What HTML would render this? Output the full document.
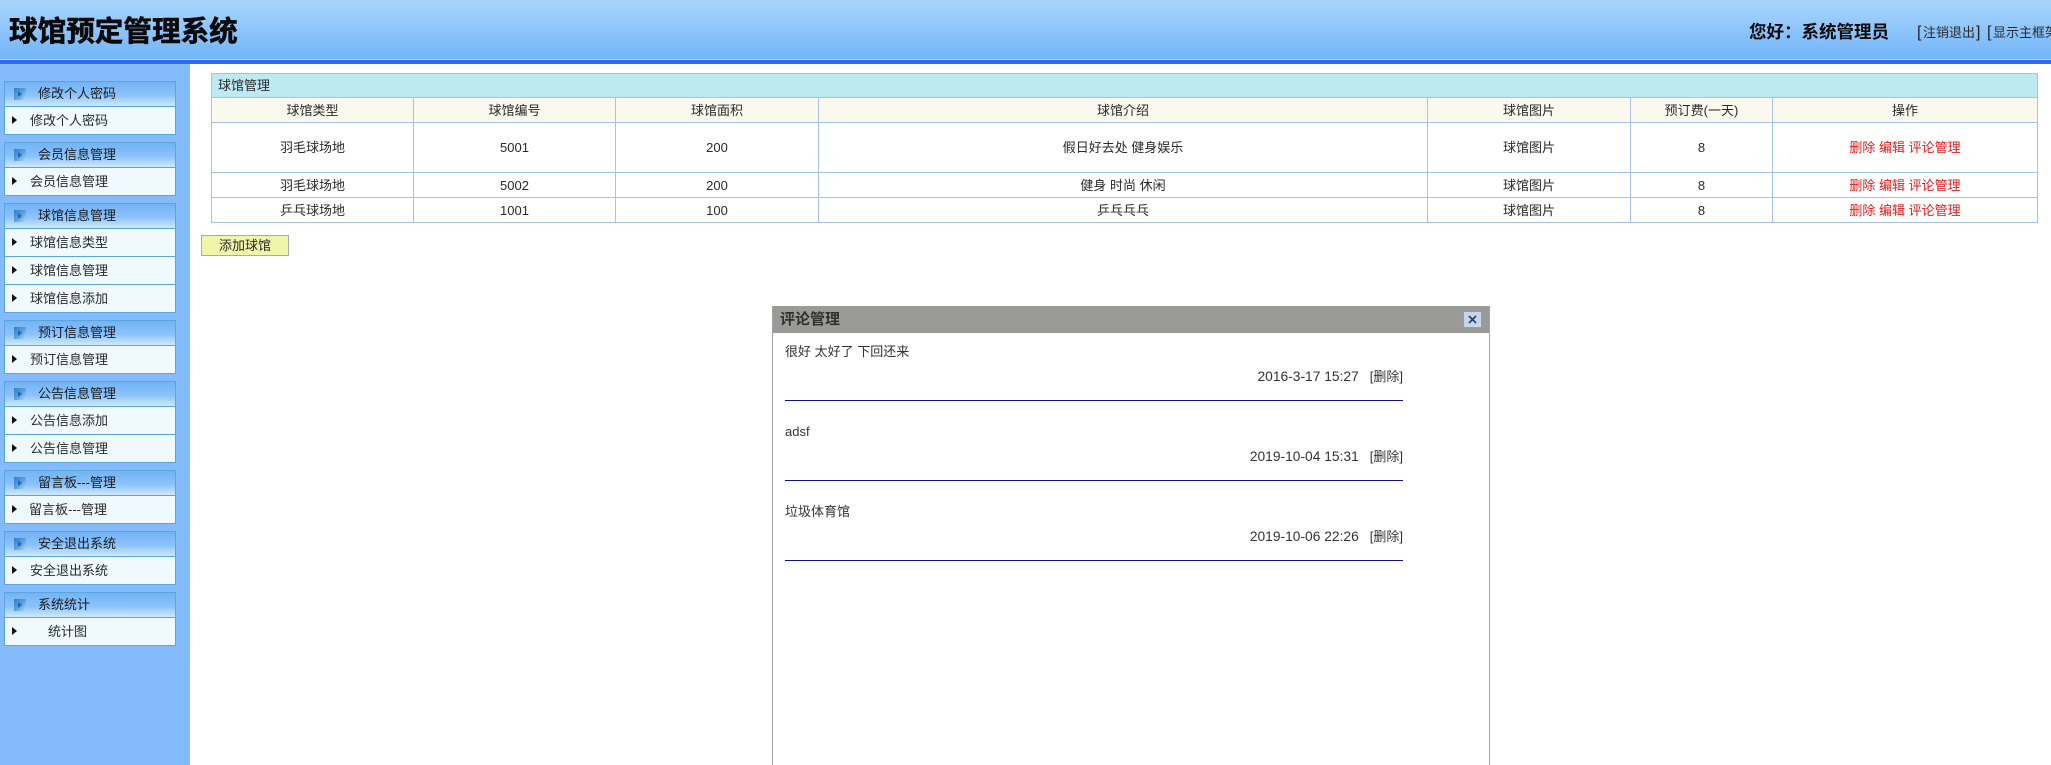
<!DOCTYPE html>
<html lang="zh"><head><meta charset="utf-8"><title>球馆预定管理系统</title>
<style>
html,body{margin:0;padding:0;background:#fff;overflow:hidden}
body{width:2051px;height:765px;position:relative;font:13px/1 "Liberation Sans","Noto Sans CJK SC",sans-serif;color:#2a2a2a}
.a{position:absolute;white-space:nowrap}
#hd{left:0;top:0;width:2051px;height:59px;background:linear-gradient(#a9d5fd,#72b5f8)}
#bar{left:0;top:59px;width:2051px;height:1px;background:#b7d8fb}
#bar2{left:0;top:60px;width:2051px;height:4px;background:#2b6cf0}
#side{left:0;top:64px;width:190px;height:701px;background:#84bbfd}
#title{left:9px;top:14px;font-size:28.6px;line-height:36px;font-weight:700;color:#0a0a0a;-webkit-text-stroke:.6px #0a0a0a}
.bk{position:absolute;left:4px;width:170px;border:1px solid #5aa6dc;background:#eff9fe}
.h{height:24px;line-height:24px;border-bottom:1px solid #5aa6dc;background:linear-gradient(#74b3f4 0,#8ac2fd 55%,#cfe9fb 100%);padding-left:33px;position:relative;color:#1a1a1a}
.h i{position:absolute;left:9px;top:6px;width:12px;height:12px;background:linear-gradient(135deg,#2f7ec4,#5fa5de 55%,#b5dcf2)}
.h i:after{content:"";position:absolute;left:4px;top:3px;border-left:4px solid #1f63c0;border-top:3px solid transparent;border-bottom:3px solid transparent}
.it{height:27px;line-height:27px;padding-left:25px;position:relative;color:#2a2a2a}
.it+.it{border-top:1px solid #5aa6dc}
.it:before{content:"";position:absolute;left:7px;top:9px;border-left:5px solid #111;border-top:4.5px solid transparent;border-bottom:4.5px solid transparent}
table{position:absolute;left:211px;top:73px;width:1826px;border-collapse:collapse;table-layout:fixed}
td{border:1px solid #a4c3ea;text-align:center;padding:0;color:#2a2a2a}
.t td{background:#bde9f3;text-align:left;padding-left:6px;height:23px}
.th td{background:#fbf8ee;height:24px}
.r td{height:24px}
.r1 td{height:49px}
td.red{color:#e01c1c}
#btn{left:201px;top:235px;width:86px;height:19px;line-height:19px;border:1px solid #a9ad9f;background:#f0f5a9;text-align:center;color:#2a2a2a}
#m{left:772px;top:306px;width:716px;height:459px;border-left:1px solid #a3a3a3;border-right:1px solid #a3a3a3;background:#fff}
#mt{left:0;top:0;width:716px;height:27px;background:#9a9b98}
#mtt{left:7px;top:0;height:27px;line-height:27px;font-size:15px;font-weight:700;color:#303030}
#x{left:1463px;top:311px;width:17px;height:15px;background:#c4d7ee;border:1px solid #8ba0bd}
.c{font-size:13px;color:#333;line-height:16px}
.d{right:648px;font-size:13.8px;color:#333;line-height:16px}
.d span{font-size:13px;margin-left:11px}
.ln{left:785px;width:618px;height:1px;background:#10108a}
.b{font-size:16px;line-height:20px;top:23px;color:#222}
</style></head><body>
<div class="a" id="hd"></div><div class="a" id="bar"></div><div class="a" id="bar2"></div><div class="a" id="side"></div>
<div class="a" id="title">球馆预定管理系统</div>
<div class="a" style="left:1749px;top:21px;font-size:17.5px;line-height:22px;font-weight:700;color:#0a0a0a">您好：系统管理员</div>
<div class="a b" style="left:1917px">[</div><div class="a" style="left:1923px;top:23px;line-height:20px">注销退出</div><div class="a b" style="left:1976px">]</div>
<div class="a b" style="left:1987px">[</div><div class="a" style="left:1993px;top:23px;line-height:20px">显示主框架</div>

<div class="bk" style="top:81px"><div class="h"><i></i>修改个人密码</div><div class="it">修改个人密码</div></div>
<div class="bk" style="top:142px"><div class="h"><i></i>会员信息管理</div><div class="it">会员信息管理</div></div>
<div class="bk" style="top:203px"><div class="h"><i></i>球馆信息管理</div><div class="it">球馆信息类型</div><div class="it">球馆信息管理</div><div class="it">球馆信息添加</div></div>
<div class="bk" style="top:320px"><div class="h"><i></i>预订信息管理</div><div class="it">预订信息管理</div></div>
<div class="bk" style="top:381px"><div class="h"><i></i>公告信息管理</div><div class="it">公告信息添加</div><div class="it">公告信息管理</div></div>
<div class="bk" style="top:470px"><div class="h"><i></i>留言板---管理</div><div class="it" style="padding-left:24px">留言板---管理</div></div>
<div class="bk" style="top:531px"><div class="h"><i></i>安全退出系统</div><div class="it">安全退出系统</div></div>
<div class="bk" style="top:592px"><div class="h"><i></i>系统统计</div><div class="it" style="padding-left:43px">统计图</div></div>

<table>
<colgroup><col style="width:202px"><col style="width:202px"><col style="width:203px"><col style="width:609px"><col style="width:203px"><col style="width:142px"><col style="width:265px"></colgroup>
<tr class="t"><td colspan="7">球馆管理</td></tr>
<tr class="th"><td>球馆类型</td><td>球馆编号</td><td>球馆面积</td><td>球馆介绍</td><td>球馆图片</td><td>预订费(一天)</td><td>操作</td></tr>
<tr class="r r1"><td>羽毛球场地</td><td>5001</td><td>200</td><td>假日好去处 健身娱乐</td><td>球馆图片</td><td>8</td><td class="red">删除 编辑 评论管理</td></tr>
<tr class="r"><td>羽毛球场地</td><td>5002</td><td>200</td><td>健身 时尚 休闲</td><td>球馆图片</td><td>8</td><td class="red">删除 编辑 评论管理</td></tr>
<tr class="r"><td>乒乓球场地</td><td>1001</td><td>100</td><td>乒乓乓乓</td><td>球馆图片</td><td>8</td><td class="red">删除 编辑 评论管理</td></tr>
</table>
<div class="a" id="btn">添加球馆</div>

<div class="a" id="m"><div class="a" id="mt"></div><div class="a" id="mtt">评论管理</div></div>
<div class="a" id="x"><svg width="17" height="15" viewBox="0 0 17 15" style="display:block"><path d="M5 4L12 11M12 4L5 11" stroke="#2b4468" stroke-width="1.7" fill="none"/></svg></div>

<div class="a c" style="left:785px;top:344px">很好 太好了 下回还来</div>
<div class="a d" style="top:369px">2016-3-17 15:27<span>[删除]</span></div>
<div class="a ln" style="top:400px"></div>
<div class="a c" style="left:785px;top:424px">adsf</div>
<div class="a d" style="top:449px">2019-10-04 15:31<span>[删除]</span></div>
<div class="a ln" style="top:480px"></div>
<div class="a c" style="left:785px;top:504px">垃圾体育馆</div>
<div class="a d" style="top:529px">2019-10-06 22:26<span>[删除]</span></div>
<div class="a ln" style="top:560px"></div>
</body></html>
